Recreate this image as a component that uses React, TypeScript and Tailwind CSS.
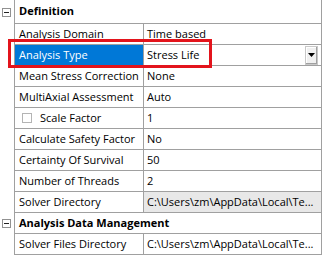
import React from "react";

const font = { fontFamily: '"Open Sans", "Noto Sans", sans-serif' };

function MinusBox() {
  return (
    <div className="w-[9px] h-[9px] border border-[#919191] bg-white flex items-center justify-center">
      <div className="w-[5px] h-px bg-[#222]" />
    </div>
  );
}

function Header({ title, tall }: { title: string; tall?: boolean }) {
  return (
    <div className={`flex ${tall ? "h-[24px]" : "h-[21px]"}`}>
      <div className="w-[14px] shrink-0 flex items-center pl-[2px]">
        <MinusBox />
      </div>
      <div className="flex-1 border-l border-r border-b border-[#a0a0a0] flex items-center pl-[4px] font-bold text-[11px] text-black whitespace-nowrap overflow-hidden">
        {title}
      </div>
    </div>
  );
}

function Row({
  label,
  value,
  selected,
  dropdown,
  gray,
  checkbox,
}: {
  label: string;
  value: string;
  selected?: boolean;
  dropdown?: boolean;
  gray?: boolean;
  checkbox?: boolean;
}) {
  return (
    <div className="flex h-[21px]">
      <div className="w-[14px] shrink-0" />
      <div className="flex-1 flex border-l border-r border-b border-[#a0a0a0] min-w-0">
        <div
          className={`w-[129px] shrink-0 border-r border-[#a0a0a0] flex items-center text-[11px] whitespace-nowrap ${
            selected ? "bg-[#0078d7] text-white" : "text-black"
          } ${checkbox ? "pl-[7px]" : "pl-[4px]"}`}
        >
          {checkbox && (
            <div className="w-[10px] h-[10px] border border-[#b4b4b4] bg-white mr-[8px] shrink-0" />
          )}
          {label}
        </div>
        <div
          className={`flex-1 min-w-0 flex items-center pl-[3px] text-[11px] text-black ${
            gray ? "bg-[#e8e8e8]" : "bg-white"
          }`}
        >
          <span className="flex-1 min-w-0 whitespace-nowrap">{value}</span>
          {dropdown && (
            <div className="w-[13px] h-[19px] mr-[3px] shrink-0 border border-[#c8c8c8] bg-[#f0f0f0] flex items-center justify-center shadow-[inset_-1px_-1px_0_#a0a0a0,inset_1px_1px_0_#ffffff]">
              <svg width="7" height="4" viewBox="0 0 7 4">
                <path d="M0 0 H7 L3.5 4 Z" fill="#000" />
              </svg>
            </div>
          )}
        </div>
      </div>
    </div>
  );
}

export default function App() {
  return (
    <div className="relative w-[322px] h-[259px] bg-white overflow-hidden" style={font}>
      <Header title="Definition" tall />
      <Row label="Analysis Domain" value="Time based" />
      <Row label="Analysis Type" value="Stress Life" selected dropdown />
      <Row label="Mean Stress Correction" value="None" />
      <Row label="MultiAxial Assessment" value="Auto" />
      <Row label="Scale Factor" value="1" checkbox />
      <Row label="Calculate Safety Factor" value="No" />
      <Row label="Certainty Of Survival" value="50" />
      <Row label="Number of Threads" value="2" />
      <Row label="Solver Directory" value="C:\Users\zm\AppData\Local\Te..." gray />
      <Header title="Analysis Data Management" />
      <Row label="Solver Files Directory" value="C:\Users\zm\AppData\Local\Te..." />
      <div className="absolute left-[8px] top-[39px] w-[204px] h-[29px] border-[3px] border-[#e3141c]" />
    </div>
  );
}
